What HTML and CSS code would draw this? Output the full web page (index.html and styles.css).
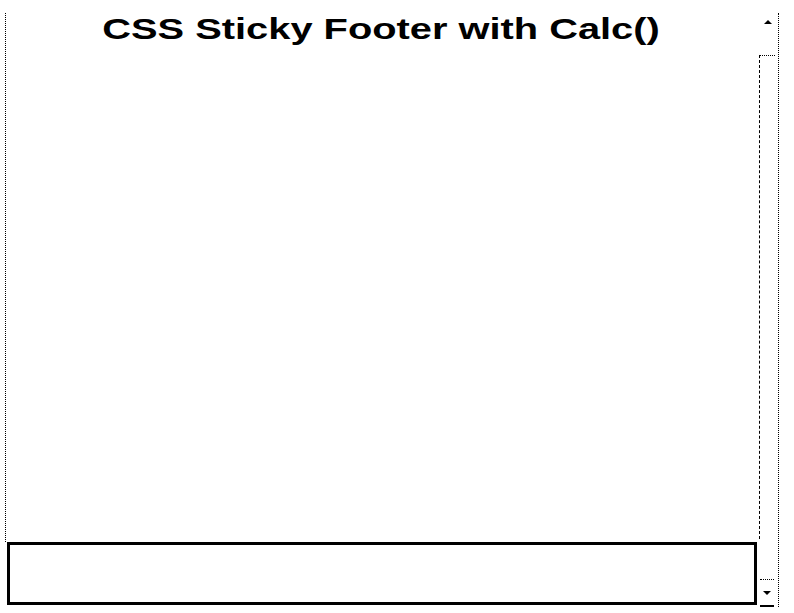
FILE: index.html
```html
<!DOCTYPE html>
<html lang="en">
<head>
    <meta charset="UTF-8">
    <meta name="viewport" content="width=device-width, initial-scale=1.0">
    <title>CSS Sticky Footer with Calc()</title>
    <link rel="stylesheet" href="styles.css">
</head>
<body>
    <div class="window">
        <div class="main">
            <div class="content">
                <h1 class="title">CSS Sticky Footer with Calc()</h1>
            </div>
            <footer class="footer"></footer>
        </div>

        <!-- fake scrollbar -->
        <div class="scrollbar">
            <div class="scroll-up"><span class="arrow arrow-up"></span></div>
            <div class="scroll-track"></div>
            <div class="scroll-down"><span class="arrow arrow-down"></span></div>
        </div>
    </div>
</body>
</html>
```

FILE: styles.css
```css
body {
    font-family: "Liberation Sans", Arial, sans-serif;
    background-color: #fff;
    color: #000;
    margin: 0;
}

.window {
    display: flex;
    height: 613px;
    padding-top: 13px;
    box-sizing: border-box;
}

.main {
    width: 757px;
    padding-left: 5px;
    box-sizing: border-box;
    display: flex;
    flex-direction: column;
}

.content {
    flex: 1;
    border-left: 1px dotted #000;
}

/* screenshot is stretched sideways, so the heading is too */
.title {
    width: fit-content;
    margin: -2px auto 0;
    font-size: 30px;
    font-weight: bold;
    line-height: 36px;
    white-space: nowrap;
    transform: scaleX(1.327);
}

.footer {
    height: 63px;
    margin-left: 2px;
    margin-bottom: 8px;
    border: 3px solid #000;
    box-sizing: border-box;
}

.scrollbar {
    width: 22px;
    margin-bottom: 6px;
    border-right: 1px dotted #000;
    box-sizing: border-box;
    display: flex;
    flex-direction: column;
}

.scroll-up {
    height: 42px;
    display: flex;
    justify-content: center;
    padding-top: 7px;
    box-sizing: border-box;
}

.scroll-track {
    height: 483px;
    margin-left: 2px;
    margin-right: 3px;
    border-left: 1px dashed #000;
    border-top: 1px dotted #000;
}

.scroll-down {
    margin-top: auto;
    height: 25px;
    margin-left: 3px;
    margin-right: 4px;
    border-top: 1px dotted #000;
    border-bottom: 2px solid #000;
    display: flex;
    justify-content: center;
    align-items: center;
}

.arrow {
    width: 0;
    height: 0;
    border-left: 4px solid transparent;
    border-right: 4px solid transparent;
}

.arrow-up {
    border-bottom: 4px solid #000;
}

.arrow-down {
    border-top: 4px solid #000;
}
```
